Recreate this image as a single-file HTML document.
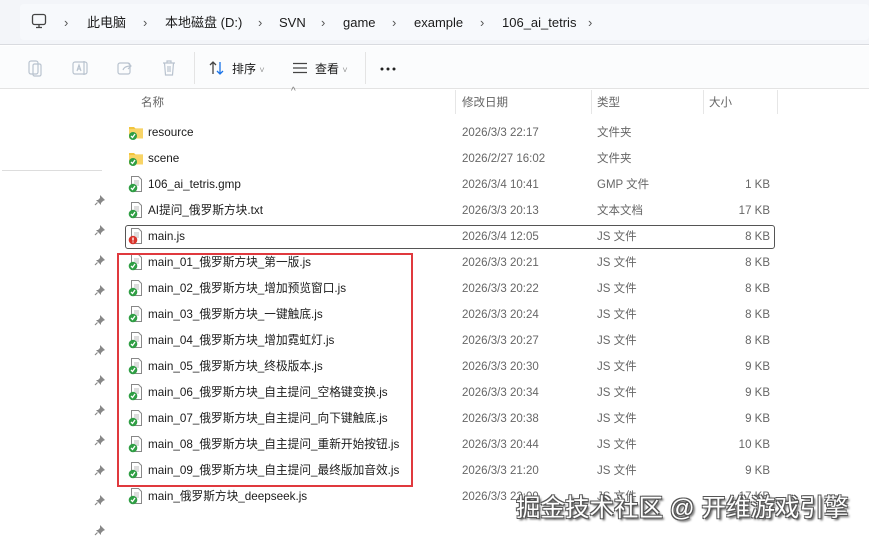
<!DOCTYPE html>
<html><head><meta charset="utf-8"><style>
*{margin:0;padding:0;box-sizing:border-box}
body{width:869px;height:540px;overflow:hidden;background:#fff;font-family:"Liberation Sans","Noto Sans CJK SC",sans-serif;position:relative;color:#1a1a1a}
.a{position:absolute;white-space:nowrap;line-height:16px}
#addr{left:0;top:0;width:869px;height:45px;background:#f3f5f9;border-bottom:1px solid #d9dbe0}
#tb{left:0;top:46px;width:869px;height:43px;background:#fbfcfd;border-bottom:1px solid #e3e3e3}
.bc{top:15px;font-size:13px;color:#1b1b1b}
.ch{top:15px;font-size:13px;color:#555}
.hd{top:95px;font-size:11.5px;color:#666}
.row{font-size:11.7px;color:#1b1b1b}
.g{font-size:11.5px;color:#666}
</style></head><body>
<div id="addr" class="a"></div>
<div class="a" style="left:20px;top:4px;width:849px;height:36px;background:#f7f9fc;border-radius:4px"></div>
<svg class="a" style="left:31px;top:13px" width="16" height="16" viewBox="0 0 16 16"><rect x="1.5" y="1.5" width="13" height="10" rx="2" fill="none" stroke="#444" stroke-width="1.3"/><path d="M5 14.5h6M8 11.5v3" stroke="#444" stroke-width="1.3"/></svg>
<span class="a ch" style="left:64px">›</span>
<span class="a bc" style="left:87px">此电脑</span>
<span class="a ch" style="left:143px">›</span>
<span class="a bc" style="left:165px">本地磁盘 (D:)</span>
<span class="a ch" style="left:258px">›</span>
<span class="a bc" style="left:279px">SVN</span>
<span class="a ch" style="left:321px">›</span>
<span class="a bc" style="left:343px">game</span>
<span class="a ch" style="left:392px">›</span>
<span class="a bc" style="left:414px">example</span>
<span class="a ch" style="left:480px">›</span>
<span class="a bc" style="left:502px">106_ai_tetris</span>
<span class="a ch" style="left:588px">›</span>
<div id="tb" class="a"></div>
<svg class="a" style="left:27px;top:59px" width="16" height="18" viewBox="0 0 16 18" fill="none" stroke="#b9c3cf" stroke-width="1.2"><rect x="2" y="2" width="9" height="13" rx="2"/><rect x="6" y="5" width="8" height="12" rx="1.5"/></svg>
<svg class="a" style="left:71px;top:59px" width="18" height="18" viewBox="0 0 18 18" fill="none" stroke="#b9c3cf" stroke-width="1.2"><rect x="2" y="3" width="14" height="12" rx="2"/><path d="M6 12l2-6 2 6M7 10h2M13 2v14"/></svg>
<svg class="a" style="left:116px;top:59px" width="18" height="18" viewBox="0 0 18 18" fill="none" stroke="#b9c3cf" stroke-width="1.2"><rect x="2" y="4" width="12" height="11" rx="2"/><path d="M7 11c1-3 4-4 8-4M12 4l3 3-3 3"/></svg>
<svg class="a" style="left:161px;top:59px" width="16" height="18" viewBox="0 0 16 18" fill="none" stroke="#b9c3cf" stroke-width="1.2"><path d="M2 4h12M6 4V2h4v2M3.5 4l1 12h7l1-12M7 7v6M9 7v6"/></svg>
<div class="a" style="left:194px;top:52px;width:1px;height:32px;background:#e4e4e4"></div>
<svg class="a" style="left:208px;top:60px" width="18" height="16" viewBox="0 0 18 16" fill="none" stroke-width="1.3"><path d="M5 14V2M2 5l3-3 3 3" stroke="#444"/><path d="M12 2v12M9 11l3 3 3-3" stroke="#1a73e8"/></svg>
<span class="a" style="left:232px;top:61px;font-size:12px">排序 <span style="color:#999;font-size:9px">˅</span></span>
<svg class="a" style="left:292px;top:62px" width="16" height="12"><path d="M1 1.5h14M1 6h14M1 10.5h14" stroke="#444" stroke-width="1.2"/></svg>
<span class="a" style="left:315px;top:61px;font-size:12px">查看 <span style="color:#999;font-size:9px">˅</span></span>
<div class="a" style="left:365px;top:52px;width:1px;height:32px;background:#e4e4e4"></div>
<svg class="a" style="left:380px;top:67px" width="18" height="4"><circle cx="2" cy="2" r="1.5" fill="#222"/><circle cx="8" cy="2" r="1.5" fill="#222"/><circle cx="14" cy="2" r="1.5" fill="#222"/></svg>
<span class="a" style="left:291px;top:84px;font-size:10px;color:#777">^</span>
<span class="a hd" style="left:141px">名称</span>
<div class="a" style="left:455px;top:90px;width:1px;height:24px;background:#e6e6e6"></div>
<span class="a hd" style="left:462px">修改日期</span>
<div class="a" style="left:591px;top:90px;width:1px;height:24px;background:#e6e6e6"></div>
<span class="a hd" style="left:597px">类型</span>
<div class="a" style="left:703px;top:90px;width:1px;height:24px;background:#e6e6e6"></div>
<span class="a hd" style="left:709px">大小</span>
<div class="a" style="left:777px;top:90px;width:1px;height:24px;background:#e6e6e6"></div>
<div class="a" style="left:2px;top:170px;width:100px;height:1px;background:#ddd"></div>
<div id="rows"></div>
<div class="a" style="left:125px;top:225px;width:650px;height:24px;border:1px solid #555;border-radius:3px"></div>
<div class="a" style="left:117px;top:253px;width:296px;height:234px;border:2px solid #e0393e"></div>
<span class="a" style="left:516px;top:495px;line-height:28px;font-size:24.5px;color:#fff;text-shadow:1px 1px 0 #555,-1px -1px 0 #555,1px -1px 0 #555,-1px 1px 0 #555,2px 2px 2px #333">掘金技术社区 @ 开维游戏引擎</span>
<script>
var R=[["resource","2026/3/3 22:17","文件夹","",0],["scene","2026/2/27 16:02","文件夹","",0],["106_ai_tetris.gmp","2026/3/4 10:41","GMP 文件","1 KB",1],["AI提问_俄罗斯方块.txt","2026/3/3 20:13","文本文档","17 KB",1],["main.js","2026/3/4 12:05","JS 文件","8 KB",2],["main_01_俄罗斯方块_第一版.js","2026/3/3 20:21","JS 文件","8 KB",1],["main_02_俄罗斯方块_增加预览窗口.js","2026/3/3 20:22","JS 文件","8 KB",1],["main_03_俄罗斯方块_一键触底.js","2026/3/3 20:24","JS 文件","8 KB",1],["main_04_俄罗斯方块_增加霓虹灯.js","2026/3/3 20:27","JS 文件","8 KB",1],["main_05_俄罗斯方块_终极版本.js","2026/3/3 20:30","JS 文件","9 KB",1],["main_06_俄罗斯方块_自主提问_空格键变换.js","2026/3/3 20:34","JS 文件","9 KB",1],["main_07_俄罗斯方块_自主提问_向下键触底.js","2026/3/3 20:38","JS 文件","9 KB",1],["main_08_俄罗斯方块_自主提问_重新开始按钮.js","2026/3/3 20:44","JS 文件","10 KB",1],["main_09_俄罗斯方块_自主提问_最终版加音效.js","2026/3/3 21:20","JS 文件","9 KB",1],["main_俄罗斯方块_deepseek.js","2026/3/3 22:09","JS 文件","17 KB",1]];
var h="";
R.forEach(function(r,i){var c=132+i*26,t=c-7;
var ic=r[4]==0?'<svg class="a" style="left:128px;top:'+(c-8)+'px" width="16" height="16"><path d="M1 3h5l1.5 1.5H15v10H1z" fill="#f2c53d"/><rect x="1" y="5" width="14" height="9.5" fill="#f8d466"/><circle cx="5" cy="12" r="4" fill="#2f9e44"/><path d="M3 12l1.5 1.5L7 10" stroke="#fff" stroke-width="1.3" fill="none"/></svg>'
:'<svg class="a" style="left:128px;top:'+(c-9)+'px" width="16" height="18"><path d="M3.5 1.5h7l3 3v12h-10z" fill="#fff" stroke="#888"/><path d="M6 6h5M6 8h5M6 10h5" stroke="#bbb"/><circle cx="5" cy="13" r="4.3" fill="'+(r[4]==2?'#d9342b':'#2f9e44')+'"/>'+(r[4]==2?'<path d="M5 10.5v3M5 14.5v1" stroke="#fff" stroke-width="1.4"/>':'<path d="M3 13l1.5 1.5L7 11" stroke="#fff" stroke-width="1.3" fill="none"/>')+'</svg>';
h+=ic+'<span class="a row" style="left:148px;top:'+t+'px">'+r[0]+'</span><span class="a g" style="left:462px;top:'+t+'px">'+r[1]+'</span><span class="a g" style="left:597px;top:'+t+'px">'+r[2]+'</span><span class="a g" style="right:99px;top:'+t+'px">'+r[3]+'</span>';});
for(var p=0;p<12;p++)h+='<svg class="a" style="left:94px;top:'+(194+p*30)+'px" width="12" height="12" viewBox="0 0 12 12"><path d="M6 1l5 5-2 1-2 2 0 2-5-5 2 0 2-2z" fill="#888"/><path d="M3.5 8.5L1 11" stroke="#888" stroke-width="1.2"/></svg>';
document.getElementById("rows").innerHTML=h;
</script>
</body></html>
